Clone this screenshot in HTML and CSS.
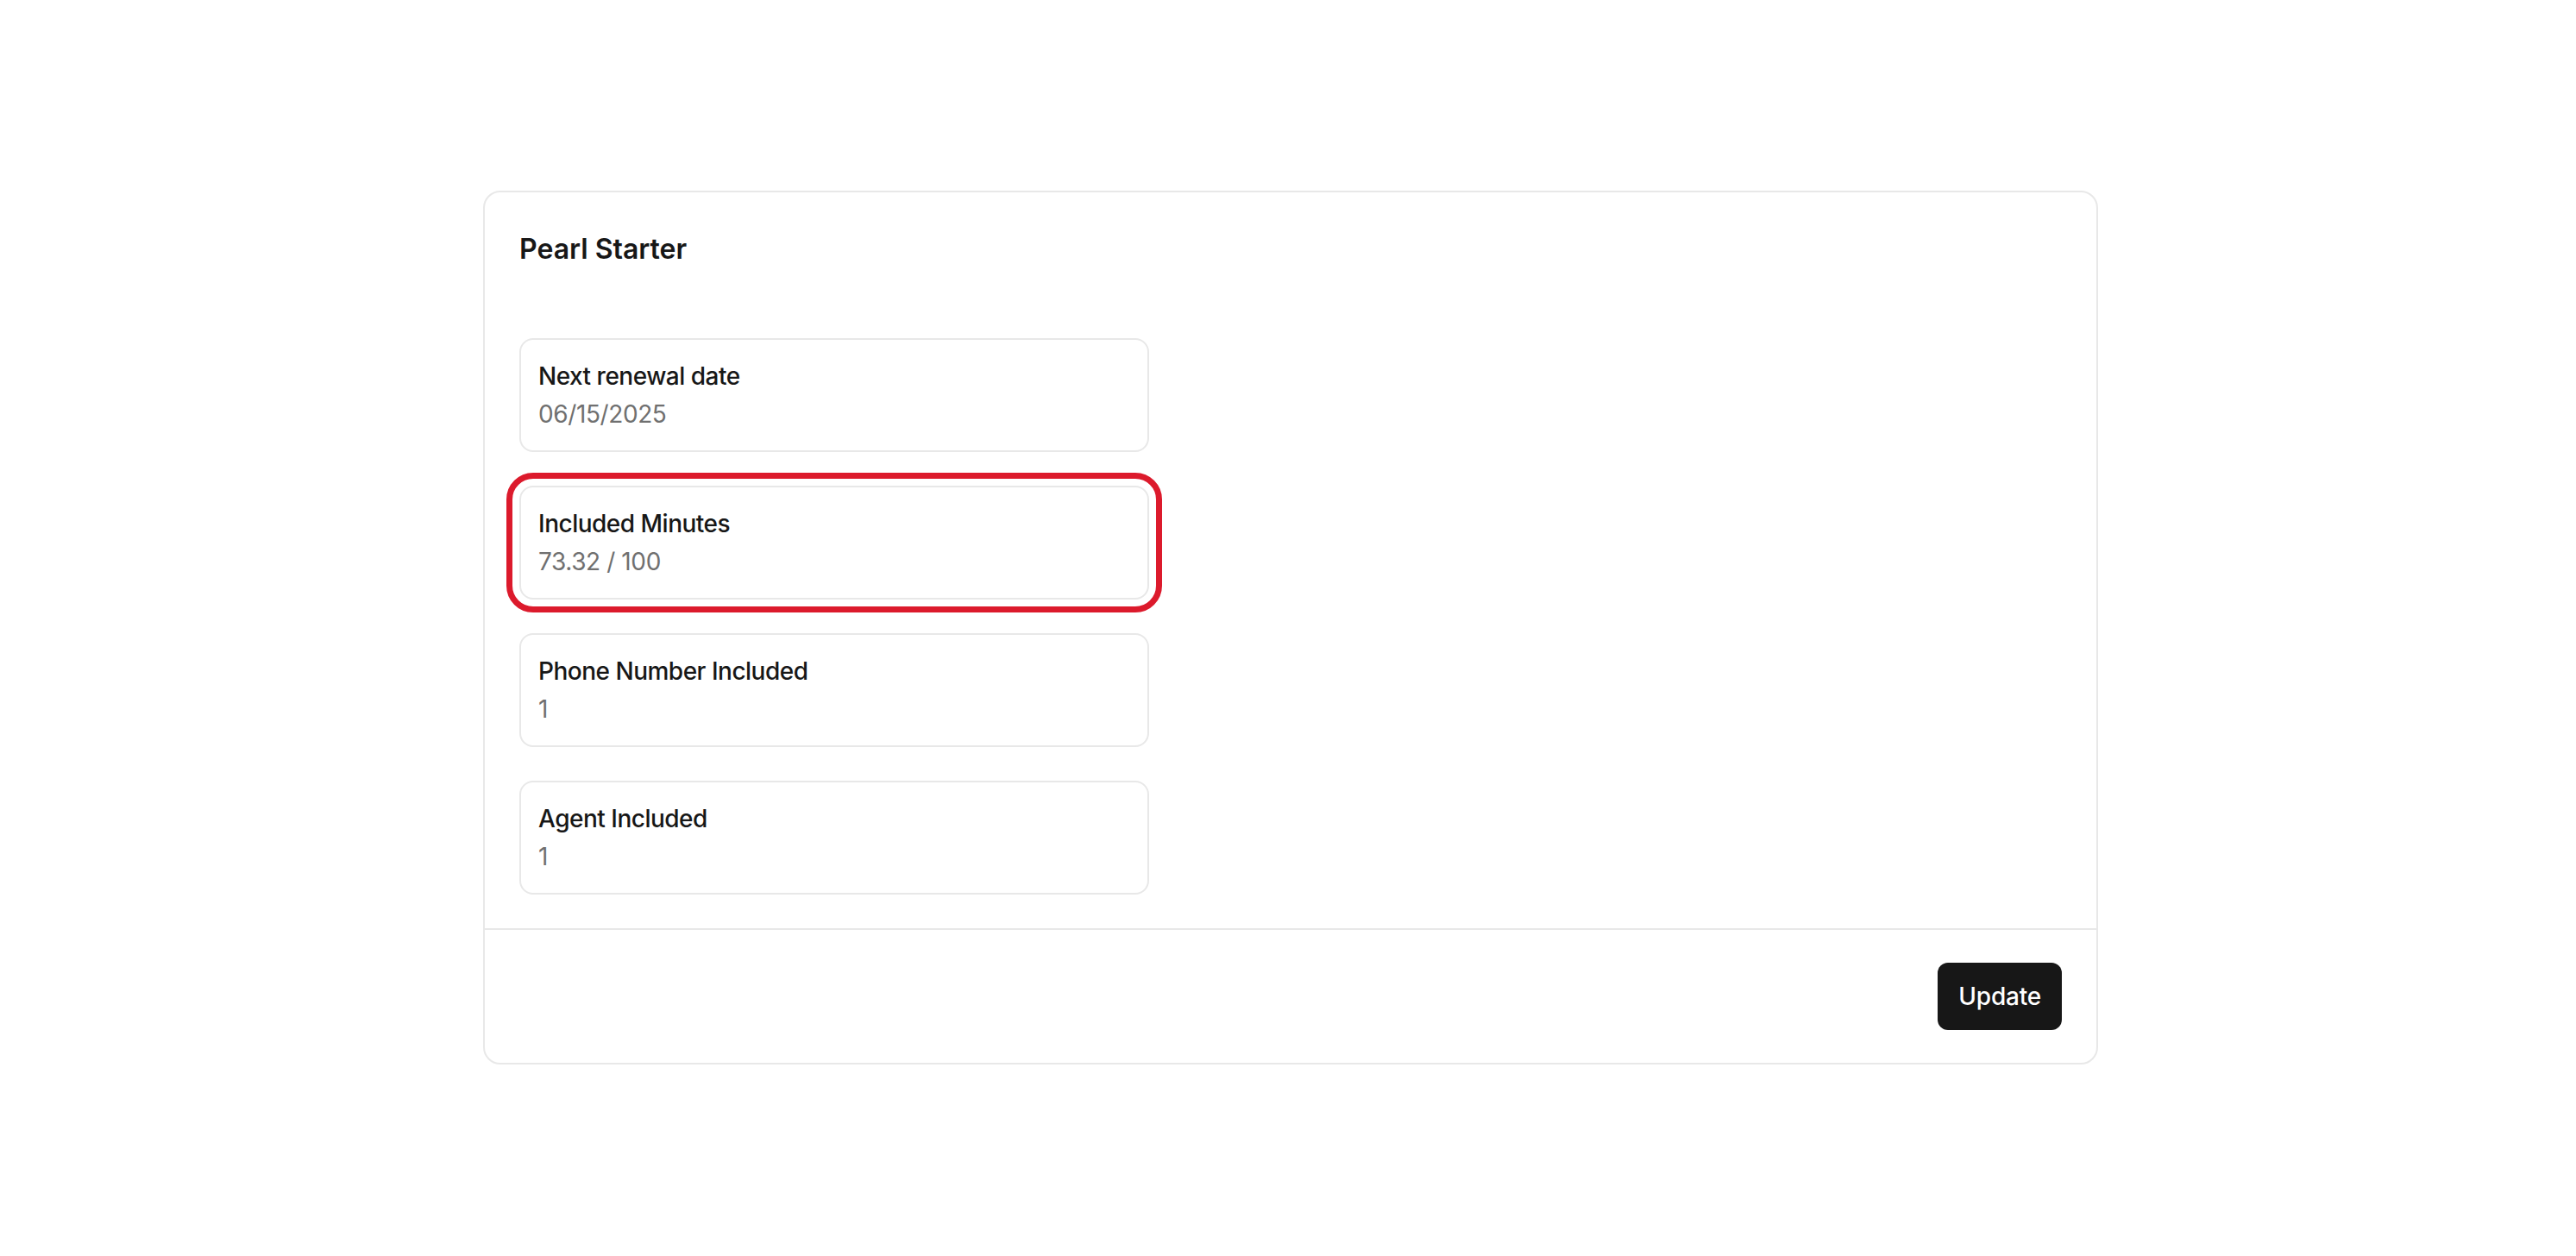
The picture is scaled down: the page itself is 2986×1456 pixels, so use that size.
FILE: index.html
```html
<!DOCTYPE html>
<html lang="en">
<head>
    <meta charset="UTF-8">
    <meta name="viewport" content="width=device-width, initial-scale=1.0">
    <title>Plan</title>
    <link rel="stylesheet" href="styles.css">
</head>
<body>
    <div class="plan-card">
        <div class="plan-body">
            <h2 class="plan-title">Pearl Starter</h2>
            <div class="plan-items">
                <div class="plan-item">
                    <div class="item-label">Next renewal date</div>
                    <div class="item-value">06/15/2025</div>
                </div>
                <div class="plan-item highlighted">
                    <div class="item-label">Included Minutes</div>
                    <div class="item-value">73.32 / 100</div>
                </div>
                <div class="plan-item">
                    <div class="item-label">Phone Number Included</div>
                    <div class="item-value">1</div>
                </div>
                <div class="plan-item">
                    <div class="item-label">Agent Included</div>
                    <div class="item-value">1</div>
                </div>
            </div>
        </div>
        <div class="plan-footer">
            <button type="button" class="update-btn">Update</button>
        </div>
    </div>
</body>
</html>
```

FILE: styles.css
```css
body {
    margin: 0;
    padding-left: 6px;
    background: #fff;
    font-family: Inter, "Noto Sans", sans-serif;
    color: #171717;
}
.plan-card {
    width: 1872px;
    margin: 221px auto 0;
    border: 2px solid #e8e8e8;
    border-radius: 20px;
    box-sizing: border-box;
}
.plan-body {
    padding: 42px 40px 39px;
}
.plan-title {
    margin: 0;
    font-size: 32px;
    line-height: 48px;
    font-weight: 600;
    letter-spacing: 0;
}
.plan-items {
    display: flex;
    flex-direction: column;
    gap: 39px;
    margin-top: 79px;
}
.plan-item {
    width: 730px;
    box-sizing: border-box;
    padding: 20px;
    border: 2px solid #e8e8e8;
    border-radius: 16px;
}
.plan-item.highlighted {
    outline: 7px solid #dc1a2c;
    outline-offset: 8px;
}
.item-label {
    font-size: 28px;
    line-height: 44px;
    font-weight: 500;
    letter-spacing: -0.5px;
}
.item-value {
    font-size: 28px;
    line-height: 44px;
    color: #707070;
    letter-spacing: -0.4px;
}
.plan-footer {
    display: flex;
    justify-content: flex-end;
    padding: 38px 40px;
    border-top: 2px solid #e8e8e8;
}
.update-btn {
    padding: 17px 24px;
    font-family: inherit;
    font-size: 28px;
    line-height: 44px;
    font-weight: 500;
    color: #fff;
    background: #171717;
    border: none;
    border-radius: 12px;
    letter-spacing: -0.2px;
    cursor: pointer;
}
```
